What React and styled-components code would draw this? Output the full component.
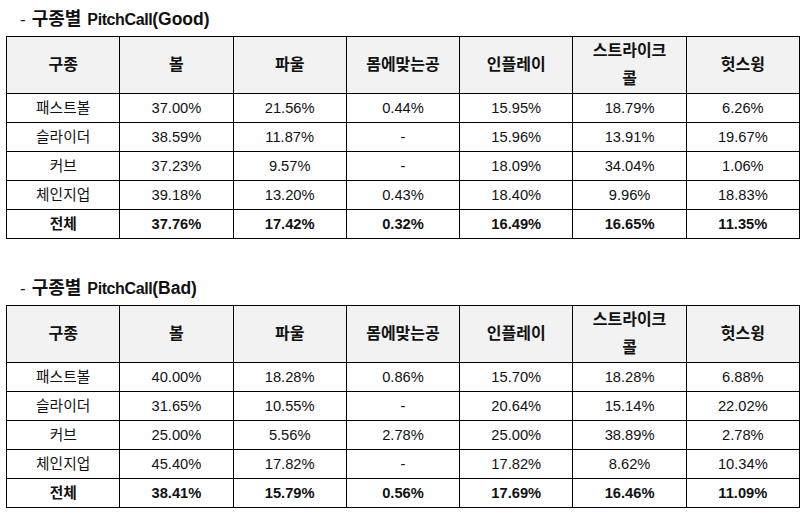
import React from 'react';
import styled, { createGlobalStyle } from 'styled-components';

const GlobalStyle = createGlobalStyle`
  body {
    margin: 0;
    background: #fff;
    font-family: "Liberation Sans", "Noto Sans CJK KR", sans-serif;
    color: #111;
  }
`;

const columns = ['구종', '볼', '파울', '몸에맞는공', '인플레이', ['스트라이크', '콜'], '헛스윙'];

const goodRows = [
  ['패스트볼', '37.00%', '21.56%', '0.44%', '15.95%', '18.79%', '6.26%'],
  ['슬라이더', '38.59%', '11.87%', '-', '15.96%', '13.91%', '19.67%'],
  ['커브', '37.23%', '9.57%', '-', '18.09%', '34.04%', '1.06%'],
  ['체인지업', '39.18%', '13.20%', '0.43%', '18.40%', '9.96%', '18.83%'],
];
const goodTotal = ['전체', '37.76%', '17.42%', '0.32%', '16.49%', '16.65%', '11.35%'];

const badRows = [
  ['패스트볼', '40.00%', '18.28%', '0.86%', '15.70%', '18.28%', '6.88%'],
  ['슬라이더', '31.65%', '10.55%', '-', '20.64%', '15.14%', '22.02%'],
  ['커브', '25.00%', '5.56%', '2.78%', '25.00%', '38.89%', '2.78%'],
  ['체인지업', '45.40%', '17.82%', '-', '17.82%', '8.62%', '10.34%'],
];
const badTotal = ['전체', '38.41%', '15.79%', '0.56%', '17.69%', '16.46%', '11.09%'];

const Page = styled.div`
  padding: 0 7px 0 6px;
`;

const Section = styled.section`
  & + & {
    margin-top: 30px;
  }
`;

const Title = styled.h2`
  height: 22px;
  margin: 0 0 6px;
  padding: 8px 0 0 14px;
  font-size: 18px;
  line-height: 22px;
  font-weight: 700;
  color: #111;
  white-space: nowrap;
  overflow: visible;
`;

const Dash = styled.span`
  font-weight: 400;
  font-size: 17px;
  margin-right: 6px;
`;

const Latin = styled.span`
  font-size: 16px;
  letter-spacing: -0.4px;
  margin-left: 6px;
`;

const Paren = styled.span`
  font-size: 17.5px;
`;

const Table = styled.table`
  width: 794px;
  border-collapse: collapse;
  table-layout: fixed;
`;

const HeadCell = styled.th`
  height: 56px;
  padding: 0;
  background: #f2f2f2;
  border: 1px solid #000;
  font-size: 16px;
  line-height: 28px;
  font-weight: 700;
  text-align: center;
  vertical-align: middle;
`;

const Cell = styled.td`
  height: 28px;
  padding: 0;
  border: 1px solid #000;
  font-size: 14.7px;
  line-height: 18px;
  font-weight: ${({ $bold }) => ($bold ? 700 : 400)};
  text-align: center;
  vertical-align: middle;
`;

const PitchTable = ({ rows, total }) => (
  <Table>
    <thead>
      <tr>
        {columns.map((c, i) => (
          <HeadCell key={i}>
            {Array.isArray(c) ? (
              <>
                {c[0]}
                <br />
                {c[1]}
              </>
            ) : (
              c
            )}
          </HeadCell>
        ))}
      </tr>
    </thead>
    <tbody>
      {rows.map((r) => (
        <tr key={r[0]}>
          {r.map((v, i) => (
            <Cell key={i}>{v}</Cell>
          ))}
        </tr>
      ))}
      <tr>
        {total.map((v, i) => (
          <Cell key={i} $bold>
            {v}
          </Cell>
        ))}
      </tr>
    </tbody>
  </Table>
);

const App = () => (
  <>
    <GlobalStyle />
    <Page>
      <Section>
        <Title>
          <Dash>-</Dash>구종별<Latin>PitchCall</Latin><Paren>(Good)</Paren>
        </Title>
        <PitchTable rows={goodRows} total={goodTotal} />
      </Section>
      <Section>
        <Title>
          <Dash>-</Dash>구종별<Latin>PitchCall</Latin><Paren>(Bad)</Paren>
        </Title>
        <PitchTable rows={badRows} total={badTotal} />
      </Section>
    </Page>
  </>
);

export default App;
